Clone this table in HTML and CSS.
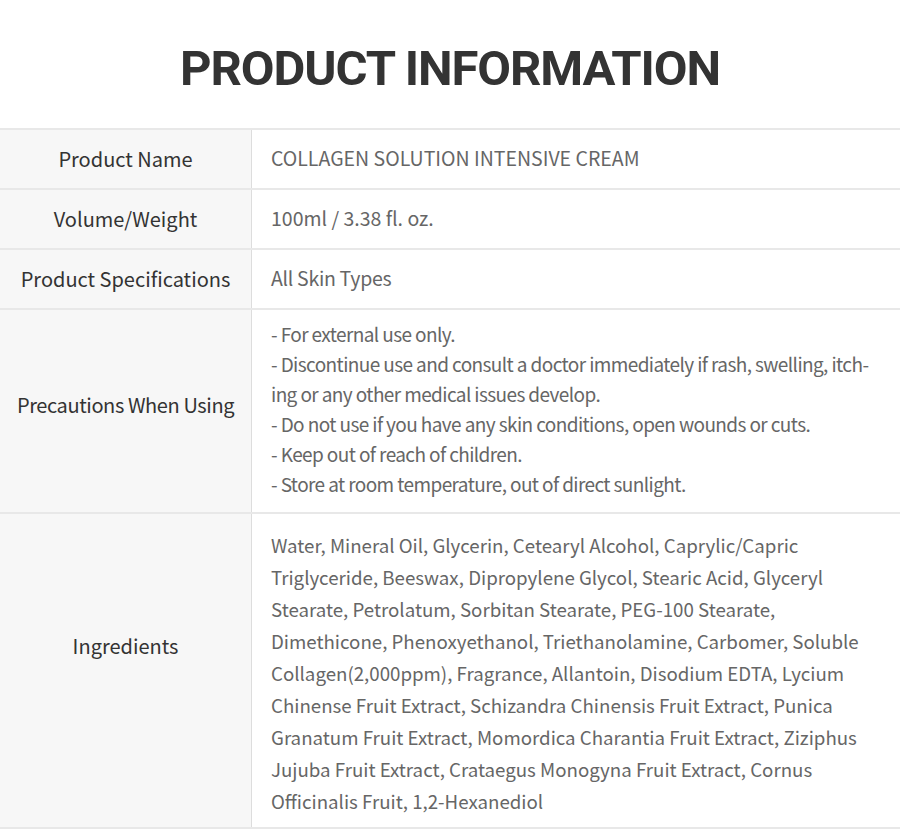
FILE: index.html
```html
<!DOCTYPE html>
<html lang="en">
<head>
<meta charset="utf-8">
<title>Product Information</title>
<link rel="stylesheet" href="styles.css">
</head>
<body>
<section class="info">
  <h1 class="info-title">PRODUCT INFORMATION</h1>
  <div class="info-table">
    <div class="row">
      <div class="label">Product Name</div>
      <div class="value">COLLAGEN SOLUTION INTENSIVE CREAM</div>
    </div>
    <div class="row">
      <div class="label">Volume/Weight</div>
      <div class="value">100ml / 3.38 fl. oz.</div>
    </div>
    <div class="row">
      <div class="label">Product Specifications</div>
      <div class="value value-short">All Skin Types</div>
    </div>
    <div class="row">
      <div class="label label-mid">Precautions When Using</div>
      <div class="value value-tight">- For external use only.<br>- Discontinue use and consult a doctor immediately if rash, swelling, itch-<br>ing or any other medical issues develop.<br>- Do not use if you have any skin conditions, open wounds or cuts.<br>- Keep out of reach of children.<br>- Store at room temperature, out of direct sunlight.</div>
    </div>
    <div class="row">
      <div class="label label-high">Ingredients</div>
      <div class="value value-long">Water, Mineral Oil, Glycerin, Cetearyl Alcohol, Caprylic/Capric Triglyceride, Beeswax, Dipropylene Glycol, Stearic Acid, Glyceryl Stearate, Petrolatum, Sorbitan Stearate, PEG-100 Stearate, Dimethicone, Phenoxyethanol, Triethanolamine, Carbomer, Soluble Collagen(2,000ppm), Fragrance, Allantoin, Disodium EDTA, Lycium Chinense Fruit Extract, Schizandra Chinensis Fruit Extract, Punica Granatum Fruit Extract, Momordica Charantia Fruit Extract, Ziziphus Jujuba Fruit Extract, Crataegus Monogyna Fruit Extract, Cornus Officinalis Fruit, 1,2-Hexanediol</div>
    </div>
  </div>
</section>
</body>
</html>
```
FILE: styles.css
```css
html, body {
  margin: 0;
  padding: 0;
  background: #ffffff;
}
.info {
  width: 900px;
}
.info-title {
  margin: 0;
  height: 128px;
  display: flex;
  align-items: center;
  justify-content: center;
  font-family: Roboto, "Liberation Sans", sans-serif;
  font-weight: 700;
  font-size: 49px;
  color: #333333;
  letter-spacing: -1.1px;
  padding-top: 9px;
  box-sizing: border-box;
}
.info-table {
  border-top: 2px solid #e8e8e8;
  font-family: "Noto Sans CJK KR", "Noto Sans", sans-serif;
}
.row {
  display: grid;
  grid-template-columns: 252px 1fr;
  border-bottom: 2px solid #e8e8e8;
}
.label {
  background: #f7f7f7;
  border-right: 1px solid #dddddd;
  display: flex;
  align-items: center;
  justify-content: center;
  font-size: 20px;
  color: #333333;
  padding-bottom: 2px;
}
.label-mid {
  padding-bottom: 14px;
  letter-spacing: -0.4px;
}
.label-high {
  padding-bottom: 50px;
}
.value {
  padding: 13px 20px 15px 19px;
  font-size: 19.5px;
  line-height: 30px;
  color: #666666;
}
.value-short {
  letter-spacing: -0.3px;
}
.value-tight {
  padding-top: 9px;
  padding-bottom: 13px;
  font-size: 19px;
  letter-spacing: -0.6px;
}
.value-long {
  padding-top: 15px;
  padding-bottom: 10px;
  font-size: 18.7px;
  line-height: 32px;
  padding-right: 38px;
}
```
